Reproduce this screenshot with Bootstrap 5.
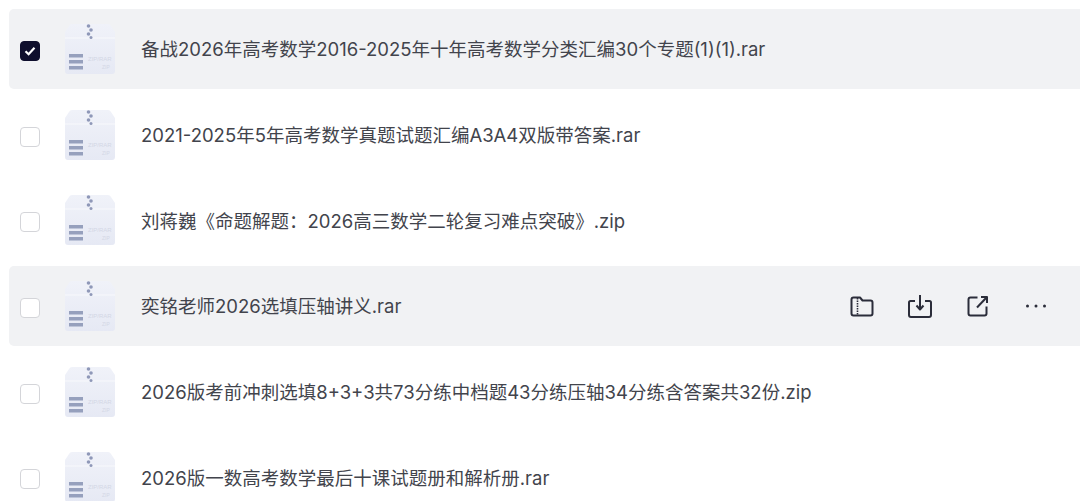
<!DOCTYPE html>
<html>
<head>
  <link href="https://cdn.jsdelivr.net/npm/bootstrap@5.3.0/dist/css/bootstrap.min.css" rel="stylesheet">
  <script src="https://cdn.jsdelivr.net/npm/bootstrap@5.3.0/dist/js/bootstrap.bundle.min.js"></script>
  <style>
    body {
      background: #fff;
      overflow: hidden;
      font-family: "Inter", "Noto Sans CJK SC", sans-serif;
    }
    .file-list {
      display: flex;
      flex-direction: column;
      gap: 5.7px;
      padding: 9px 0 0 9px;
      width: 1089px;
    }
    .file-row {
      height: 80px;
      flex: none;
      padding-left: 11px;
      border-radius: 5px;
    }
    .file-row.active-row {
      background: #f1f2f4;
    }
    .file-check {
      width: 20px;
      height: 20px;
      flex: none;
      margin-top: 4px;
      border: 1px solid #d4d5d9;
      border-radius: 4px;
      background: #fff;
    }
    .file-check.checked {
      background: #0f0f2d;
      border-color: #0f0f2d;
    }
    .file-thumb {
      width: 52px;
      height: 52px;
      flex: none;
      margin-left: 24px;
    }
    .file-name {
      margin-left: 25px;
      margin-top: 2px;
      font-size: 18.5px;
      color: #42444c;
      white-space: nowrap;
    }
    .file-actions {
      margin-right: 41px;
      gap: 34px;
    }
    .file-actions svg {
      width: 24px;
      height: 24px;
      flex: none;
    }
  </style>
</head>
<body>

<svg width="0" height="0" class="position-absolute">
  <defs>
    <linearGradient id="thumbFill" x1="0" y1="0" x2="0" y2="1">
      <stop offset="0" stop-color="#f0f2f9"/>
      <stop offset="1" stop-color="#e6e9f4"/>
    </linearGradient>
  </defs>
</svg>

<div class="file-list">

  <div class="file-row active-row d-flex align-items-center">
    <div class="file-check checked d-flex align-items-center justify-content-center">
      <svg width="14" height="14" viewBox="0 0 14 14"><path d="M2.5 7.2L5.6 10.2L11.5 3.8" fill="none" stroke="#fff" stroke-width="2.2"/></svg>
    </div>
    <svg class="file-thumb" viewBox="0 0 52 52"></svg>
    <div class="file-name">备战2026年高考数学2016-2025年十年高考数学分类汇编30个专题(1)(1).rar</div>
  </div>

  <div class="file-row d-flex align-items-center">
    <div class="file-check"></div>
    <svg class="file-thumb" viewBox="0 0 52 52"></svg>
    <div class="file-name">2021-2025年5年高考数学真题试题汇编A3A4双版带答案.rar</div>
  </div>

  <div class="file-row d-flex align-items-center">
    <div class="file-check"></div>
    <svg class="file-thumb" viewBox="0 0 52 52"></svg>
    <div class="file-name">刘蒋巍《命题解题：2026高三数学二轮复习难点突破》.zip</div>
  </div>

  <div class="file-row active-row d-flex align-items-center">
    <div class="file-check"></div>
    <svg class="file-thumb" viewBox="0 0 52 52"></svg>
    <div class="file-name">奕铭老师2026选填压轴讲义.rar</div>
    <div class="file-actions d-flex align-items-center ms-auto">
      <!-- folder with zip line -->
      <svg viewBox="0 0 24 24" fill="none" stroke="#2b2d3a" stroke-width="2" stroke-linejoin="round">
        <path d="M1.500 5.500Q1.500 3.500 3.500 3.500H10L12.500 6.500H20.500Q22.500 6.500 22.500 8.500V19.500Q22.500 21.500 20.500 21.500H3.500Q1.500 21.500 1.500 19.500Z"/>
        <path d="M7.500 4V21" stroke-width="1.600" stroke-dasharray="1.500 1"/>
      </svg>
      <!-- download to tray -->
      <svg viewBox="0 0 24 24" fill="none" stroke="#2b2d3a" stroke-width="2" stroke-linejoin="round">
        <path d="M7 7H2.500Q1 7 1 8.500V21Q1 23 3 23H21Q23 23 23 21V8.500Q23 7 21.500 7H17"/>
        <path d="M12 1V15"/>
        <path d="M8.500 11.500L12 15.500L15.500 11.500"/>
      </svg>
      <!-- share out -->
      <svg viewBox="0 0 24 24" fill="none" stroke="#2b2d3a" stroke-width="2" stroke-linejoin="round">
        <path d="M11.500 3.500H4.500Q2.500 3.500 2.500 5.500V19.500Q2.500 21.500 4.500 21.500H18.500Q20.500 21.500 20.500 19.500V12.500"/>
        <path d="M11 13.500L20.500 3.500"/>
        <path d="M15 3H21V9"/>
      </svg>
      <!-- more -->
      <svg viewBox="0 0 24 24" fill="#2b2d3a">
        <circle cx="3.500" cy="12" r="1.500"/>
        <circle cx="12" cy="12" r="1.500"/>
        <circle cx="20.500" cy="12" r="1.500"/>
      </svg>
    </div>
  </div>

  <div class="file-row d-flex align-items-center">
    <div class="file-check"></div>
    <svg class="file-thumb" viewBox="0 0 52 52"></svg>
    <div class="file-name">2026版考前冲刺选填8+3+3共73分练中档题43分练压轴34分练含答案共32份.zip</div>
  </div>

  <div class="file-row d-flex align-items-center">
    <div class="file-check"></div>
    <svg class="file-thumb" viewBox="0 0 52 52"></svg>
    <div class="file-name">2026版一数高考数学最后十课试题册和解析册.rar</div>
  </div>

</div>

<script>
// same archive thumbnail on every row
const thumbSvg = `
  <path d="M8 1H44Q46 1 47 3L51 9V48Q51 51 48 51H4Q1 51 1 48V9L5 3Q6 1 8 1Z" fill="url(#thumbFill)"/>
  <path d="M1 15H51" stroke="#f8f9fc" stroke-width="1"/>
  <g fill="#8f98b8">
    <circle cx="24.500" cy="3" r="1.800"/>
    <circle cx="27" cy="7" r="1.800"/>
    <circle cx="24.500" cy="11" r="1.800"/>
    <circle cx="27" cy="14.500" r="1.500"/>
  </g>
  <g fill="#96a0bd">
    <rect x="5" y="31" width="14" height="3.500"/>
    <rect x="5" y="37" width="14" height="3.500"/>
    <rect x="5" y="43" width="14" height="3.500"/>
  </g>
  <text x="24" y="38" font-size="6" font-family="Liberation Sans, sans-serif" fill="#d3d7e5">ZIP/RAR</text>
  <text x="38" y="46" font-size="5" font-family="Liberation Sans, sans-serif" fill="#d3d7e5">ZIP</text>`;

document.querySelectorAll('.file-thumb').forEach(el => {
  el.innerHTML = thumbSvg;
});
</script>

</body>
</html>
